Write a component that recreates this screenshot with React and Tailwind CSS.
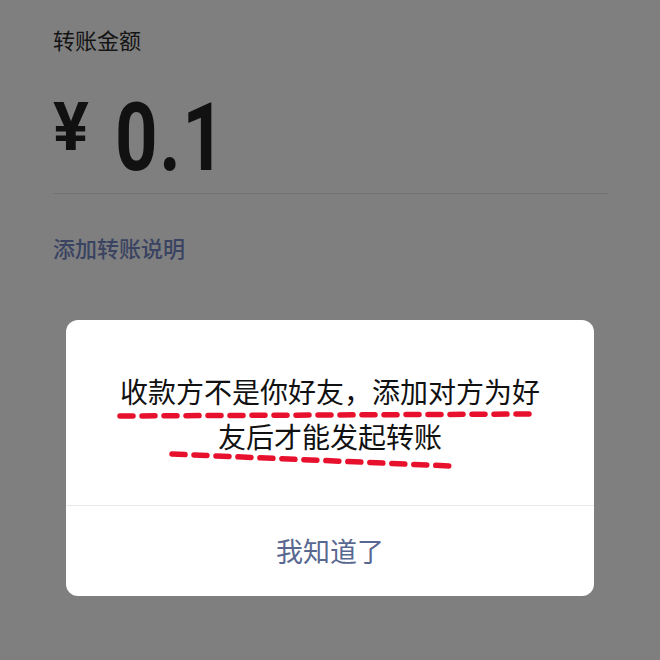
export default function App() {
  const cjk = { fontFamily: '"Noto Sans CJK SC", "Noto Sans", sans-serif' };
  return (
    <div className="relative w-[660px] h-[660px] overflow-hidden bg-[#7f7f7f]" style={cjk}>
      <div className="pl-[53px] pr-[52px] pt-[24px]">
        <div className="text-[22px] leading-[30px] text-[#141414]">转账金额</div>
        <div className="mt-[37px] flex items-start h-[94px]">
          <span
            className="mt-[3px] text-[67px] leading-none font-bold text-[#111111] inline-block origin-left"
            style={{ fontFamily: 'Roboto, sans-serif' }}
          >
            ¥
          </span>
          <span
            className="ml-[26px] text-[94px] leading-none font-bold tracking-[2px] text-[#111111] inline-block origin-left scale-x-[0.79]"
            style={{ fontFamily: 'Roboto, sans-serif' }}
          >
            0.1
          </span>
        </div>
        <div className="mt-[8px] h-px bg-[#737373]" />
        <div className="mt-[38px] text-[22px] leading-[30px] text-[#3a4361] font-medium">添加转账说明</div>
      </div>

      <div className="absolute left-[66px] top-[320px] w-[528px] h-[276px] rounded-[12px] bg-white flex flex-col">
        <div className="h-[185px] px-[50px] pt-[49px] text-center text-[28px] leading-[45px] text-[#111111]">
          收款方不是你好友，添加对方为好友后才能发起转账
        </div>
        <div className="h-px bg-[#e8e8e8]" />
        <div className="flex-1 flex items-center justify-center text-[27px] text-[#586890]">我知道了</div>
      </div>

      <svg className="absolute left-0 top-0 pointer-events-none" width="660" height="660" viewBox="0 0 660 660">
        <line x1="120" y1="416" x2="530" y2="414" stroke="#e8112d" strokeWidth="5.5" strokeLinecap="round" strokeDasharray="13 9" />
        <line x1="172" y1="454" x2="451" y2="466" stroke="#e8112d" strokeWidth="5.5" strokeLinecap="round" strokeDasharray="13 9" />
      </svg>
    </div>
  );
}
